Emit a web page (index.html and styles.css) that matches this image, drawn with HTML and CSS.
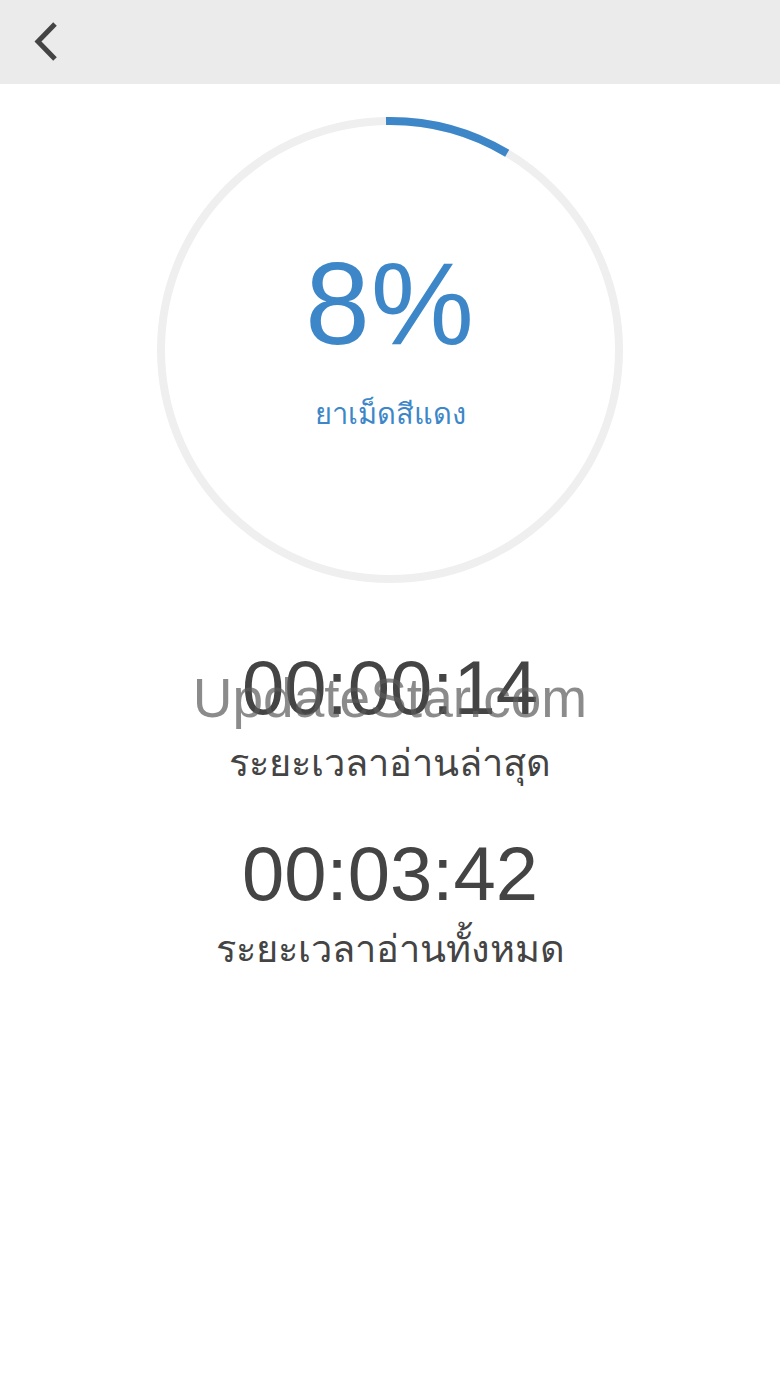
FILE: index.html
```html
<!DOCTYPE html>
<html lang="th">
<head>
    <meta charset="UTF-8">
    <meta name="viewport" content="width=device-width, initial-scale=1.0">
    <title>ยาเม็ดสีแดง</title>
    <link rel="stylesheet" href="styles.css">
</head>
<body>
    <header class="topbar">
        <button class="back" aria-label="กลับ">
            <svg width="30" height="48" viewBox="0 0 30 48">
                <path d="M24 6 L7 23.5 L24 41" fill="none" stroke="#444" stroke-width="5" stroke-linejoin="miter"/>
            </svg>
        </button>
    </header>

    <section class="progress">
        <svg class="ring" width="474" height="474" viewBox="0 0 474 474">
            <circle cx="237" cy="237" r="229" fill="none" stroke="#efefef" stroke-width="8"/>
            <circle cx="237" cy="237" r="229" fill="none" stroke="#3d87c9" stroke-width="8"
                stroke-dasharray="127 1438.8" transform="rotate(-91 237 237)"/>
        </svg>
        <div class="ring-text">
            <div class="percent">8%</div>
            <div class="name">ยาเม็ดสีแดง</div>
        </div>
    </section>

    <section class="times">
        <div class="time-block">
            <div class="time">00:00:14</div>
            <div class="label">ระยะเวลาอ่านล่าสุด</div>
        </div>
        <div class="time-block">
            <div class="time">00:03:42</div>
            <div class="label">ระยะเวลาอ่านทั้งหมด</div>
        </div>
        <div class="watermark">UpdateStar.com</div>
    </section>
</body>
</html>
```

FILE: styles.css
```css
body {
    margin: 0;
    background: #fff;
    font-family: "Liberation Sans", Arial, sans-serif;
    color: #444;
}
.topbar {
    height: 84px;
    background: #ebebeb;
    display: flex;
    align-items: center;
}
.back {
    background: none;
    border: none;
    padding: 0;
    margin-left: 31px;
    display: flex;
}
.progress {
    position: relative;
    width: 474px;
    height: 474px;
    margin: 29px auto 0;
}
.ring {
    display: block;
}
.ring-text {
    position: absolute;
    left: 0;
    right: 0;
    top: 0;
    bottom: 0;
    display: flex;
    flex-direction: column;
    align-items: center;
    padding-top: 121px;
    color: #3d87c9;
}
.percent {
    font-size: 116px;
    line-height: 140px;
    font-weight: 300;
    letter-spacing: 1px;
}
.name {
    font-size: 29px;
    line-height: 40px;
    margin-top: 20px;
}
.times {
    position: relative;
    display: flex;
    flex-direction: column;
    align-items: center;
    gap: 44px;
    margin-top: 56px;
}
.time-block {
    display: flex;
    flex-direction: column;
    align-items: center;
}
.time {
    font-size: 76px;
    line-height: 90px;
}
.label {
    font-size: 38px;
    line-height: 44px;
    margin-top: 8px;
}
.watermark {
    position: absolute;
    top: 25px;
    left: 0;
    right: 0;
    text-align: center;
    font-size: 55px;
    color: rgba(90, 90, 90, 0.7);
    line-height: 60px;
}
```
